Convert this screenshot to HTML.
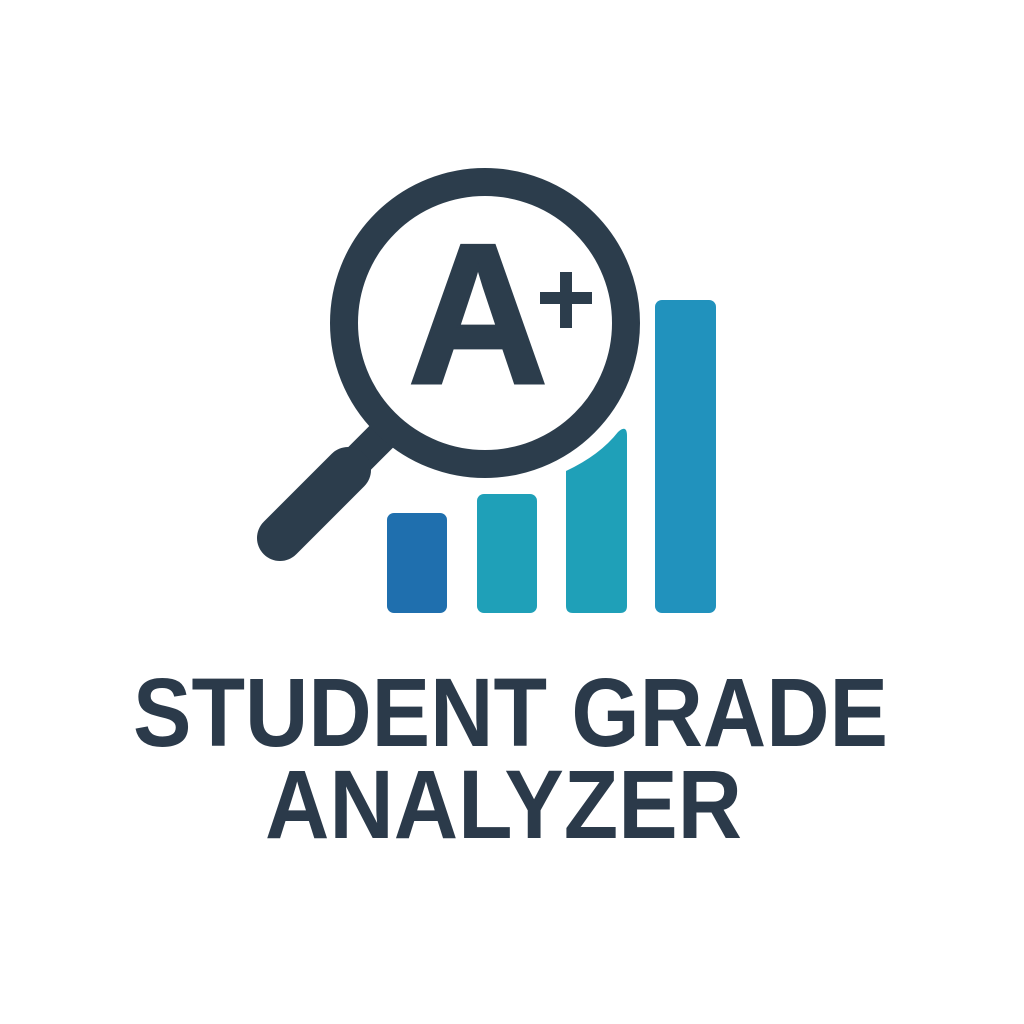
<!DOCTYPE html>
<html><head><style>html,body{margin:0;padding:0;background:#fff;width:1024px;height:1024px;overflow:hidden}</style></head>
<body>
<svg width="1024" height="1024" viewBox="0 0 1024 1024" xmlns="http://www.w3.org/2000/svg">
<rect width="1024" height="1024" fill="#fff"/>
<rect x="387" y="513" width="60" height="100" rx="7" fill="#1f6fae"/>
<rect x="477" y="494" width="60" height="119" rx="7" fill="#1fa0b8"/>
<path d="M566 471 Q600 455 618 432 Q627 424 627 436 L627 606 Q627 613 620 613 L573 613 Q566 613 566 606 Z" fill="#1fa0b8"/>
<rect x="655" y="300" width="61" height="313" rx="7" fill="#2192bd"/>
<line x1="392" y1="426" x2="350" y2="468" stroke="#2c3d4c" stroke-width="32"/>
<line x1="348" y1="470" x2="280" y2="538" stroke="#2c3d4c" stroke-width="46" stroke-linecap="round"/>
<circle cx="485" cy="323" r="141" fill="#fff" stroke="#2c3d4c" stroke-width="28"/>
<text x="478" y="383" font-family="Liberation Sans, sans-serif" font-weight="bold" font-size="200" fill="#2c3d4c" text-anchor="middle" textLength="140" lengthAdjust="spacingAndGlyphs" stroke="#2c3d4c" stroke-width="3">A</text>
<rect x="560" y="272" width="12" height="56" fill="#2c3d4c"/>
<rect x="540" y="292" width="52" height="12" fill="#2c3d4c"/>
<text x="133" y="746" font-family="Liberation Sans, sans-serif" font-weight="bold" font-size="97" fill="#2b3a4a" textLength="755" lengthAdjust="spacingAndGlyphs">STUDENT GRADE</text>
<text x="265" y="838" font-family="Liberation Sans, sans-serif" font-weight="bold" font-size="97" fill="#2b3a4a" textLength="477" lengthAdjust="spacingAndGlyphs">ANALYZER</text>
</svg>
</body></html>
